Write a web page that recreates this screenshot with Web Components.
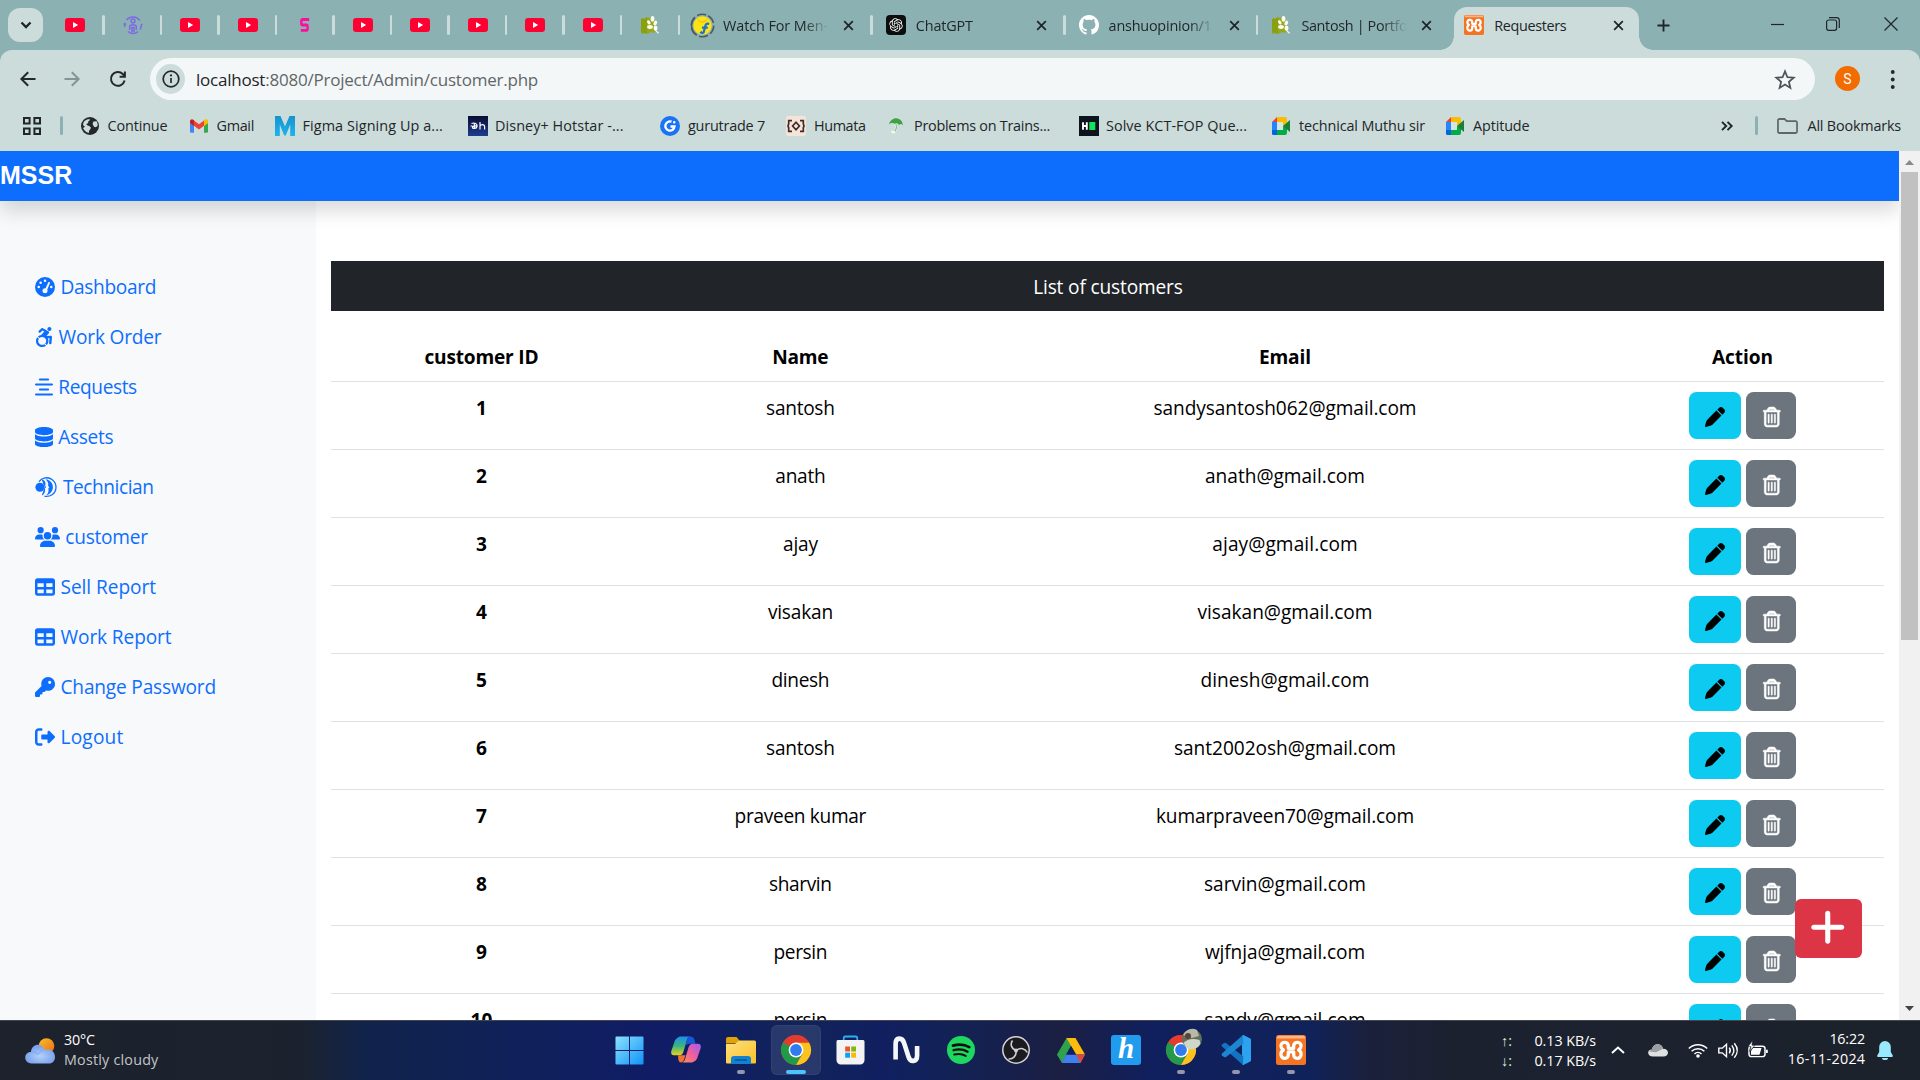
<!DOCTYPE html>
<html lang="en">
<head>
<meta charset="utf-8">
<title>Requesters</title>
<style>
html,body{margin:0;padding:0;height:100%;overflow:hidden}
body{font-family:"Open Sans","Noto Sans",sans-serif;color:#1f2528}
</style>
</head>
<body>
<desktop-screen></desktop-screen>
<script>
const FA = {
  database:['0 0 448 512','<path d="M448 80v48c0 44.2-100.3 80-224 80S0 172.2 0 128V80C0 35.8 100.3 0 224 0S448 35.8 448 80zM393.2 214.7c20.8-7.4 39.9-16.9 54.8-28.6V288c0 44.2-100.3 80-224 80S0 332.2 0 288V186.1c14.9 11.8 34 21.2 54.8 28.6C99.7 230.7 159.5 240 224 240s124.3-9.3 169.2-25.3zM0 346.1c14.9 11.8 34 21.2 54.8 28.6C99.7 390.7 159.5 400 224 400s124.3-9.3 169.2-25.3c20.8-7.4 39.9-16.9 54.8-28.6V432c0 44.2-100.3 80-224 80S0 476.2 0 432V346.1z"/>'],
  table:['0 0 512 512','<path d="M64 256V160H224v96H64zm0 64H224v96H64V320zm224 96V320H448v96H288zM448 256H288V160H448v96zM64 32C28.7 32 0 60.7 0 96V416c0 35.3 28.7 64 64 64H448c35.3 0 64-28.7 64-64V96c0-35.3-28.7-64-64-64H64z"/>'],
  key:['0 0 512 512','<path d="M336 352c97.2 0 176-78.8 176-176S433.2 0 336 0S160 78.8 160 176c0 18.7 2.9 36.8 8.3 53.7L7 391c-4.5 4.5-7 10.6-7 17v80c0 13.3 10.7 24 24 24h80c13.3 0 24-10.7 24-24V448h40c13.3 0 24-10.7 24-24V384h40c6.4 0 12.5-2.5 17-7l33.3-33.3c16.9 5.4 35 8.3 53.7 8.3zM376 96a40 40 0 1 1 0 80 40 40 0 1 1 0-80z"/>'],
  logout:['0 0 512 512','<path d="M377.9 105.9L500.7 228.7c7.2 7.2 11.3 17.1 11.3 27.3s-4.1 20.1-11.3 27.3L377.9 406.1c-6.4 6.4-15 9.9-24 9.9c-18.7 0-33.9-15.2-33.9-33.9l0-62.1-128 0c-17.7 0-32-14.3-32-32l0-64c0-17.7 14.3-32 32-32l128 0 0-62.1c0-18.7 15.2-33.9 33.9-33.9c9 0 17.6 3.6 24 9.9zM160 96L96 96c-17.7 0-32 14.3-32 32l0 256c0 17.7 14.3 32 32 32l64 0c17.7 0 32 14.3 32 32s-14.3 32-32 32l-64 0c-53 0-96-43-96-96L0 128C0 75 43 32 96 32l64 0c17.7 0 32 14.3 32 32s-14.3 32-32 32z"/>'],
  users:['0 0 640 512','<path d="M144 0a80 80 0 1 1 0 160A80 80 0 1 1 144 0zM512 0a80 80 0 1 1 0 160A80 80 0 1 1 512 0zM0 298.7C0 239.8 47.8 192 106.7 192h42.7c15.9 0 31 3.5 44.6 9.7c-1.3 7.2-1.9 14.7-1.9 22.3c0 38.2 16.8 72.5 43.3 96c-.2 0-.4 0-.7 0H21.3C9.6 320 0 310.4 0 298.7zM405.3 320c-.2 0-.4 0-.7 0c26.6-23.5 43.3-57.8 43.3-96c0-7.6-.7-15-1.9-22.3c13.6-6.3 28.7-9.7 44.6-9.7h42.7C592.2 192 640 239.8 640 298.7c0 11.8-9.6 21.3-21.3 21.3H405.3zM224 224a96 96 0 1 1 192 0 96 96 0 1 1 -192 0zM128 485.3C128 411.7 187.7 352 261.3 352H378.7C452.3 352 512 411.7 512 485.3c0 14.7-11.9 26.7-26.7 26.7H154.7c-14.7 0-26.7-11.9-26.7-26.7z"/>'],
  access:['0 0 448 512','<path d="M423.9 255.8L411 413.1c-3.3 40.7-63.9 35.1-60.6-4.9l10-122.5-41.1 2.3c10.1 20.7 15.8 43.9 15.8 68.5 0 41.2-16.1 78.7-42.3 106.5l-39.3-39.3c57.9-63.7 13.1-167.2-74-167.2-25.9 0-49.5 9.9-67.2 26L73 243.2c22-20.7 50.1-35.1 81.4-40.2l75.3-85.7-42.6-24.8-51.6 46c-30 26.8-70.6-18.5-40.5-45.4l68-60.7c9.8-8.8 24.1-10.2 35.5-3.6 0 0 139.3 80.9 139.5 81.1 16.2 10.1 20.7 36 6.1 52.6L285.7 229l106.1-5.9c18.5-1.1 33.6 14.4 32.1 32.7zm-64.9-154c28.1 0 50.9-22.8 50.9-50.9C409.9 22.8 387.1 0 359 0c-28.1 0-50.9 22.8-50.9 50.9 0 28.1 22.8 50.9 50.9 50.9zM179.6 456.5c-80.6 0-127.4-90.6-82.7-156.1l-39.7-39.7C36.4 287 24 320.3 24 356.4c0 130.7 150.7 201.4 251.4 122.5l-39.7-39.7c-16 10.9-35.3 17.3-56.1 17.3z"/>'],
  align:['0 0 448 512','<g fill="none" stroke="currentColor" stroke-width="52" stroke-linecap="round"><path d="M122 62h204M26 190h396M122 318h204M26 446h396"/></g>'],
  gauge:['0 0 512 512','<circle cx="256" cy="256" r="256"/><g fill="#f8f9fb"><circle cx="144" cy="144" r="32"/><circle cx="256" cy="96" r="32"/><circle cx="96" cy="256" r="32"/><circle cx="416" cy="256" r="32"/><circle cx="256" cy="352" r="64"/><path d="M338 142a24 24 0 0 1 44 20L300 350l-46-22z"/></g>'],
  teamspeak:['0 0 22 20','<circle cx="4.900" cy="10.300" r="4.500"/><path d="M6.500 2.500C11 3 10.800 7 10.200 9l1 1.300-1.200 1c.5 3.200-.4 5.700-3 7.200-.4-1.200 1-2.500 1.200-4.500L9.800 10 8 6.500C8 5 7.200 4 6.500 2.500z"/><path d="M10.600 2.200C20 3.500 20.500 16 11.300 18.300c2.200-2 2.600-4.300 2-6.800l1-1.300-1.200-1.200c.6-2.700-.5-5-2.500-6.800z"/><path d="M4 4.700C6.500.7 13-.7 17.300 2.700c4.900 3.700 5 11.500-.2 15-2 1.400-5 1.900-7.600 1.600" fill="none" stroke="currentColor" stroke-width="1.300"/>'],
  pen:['0 0 512 512','<path d="M362.700 19.300L314.300 67.700 444.300 197.700l48.400-48.400c25-25 25-65.500 0-90.500L453.300 19.300c-25-25-65.500-25-90.500 0zm-71 71L58.600 323.500c-10.400 10.400-18 23.300-22.200 37.400L1 481.200C-1.500 489.700 .8 498.800 7 505s15.300 8.500 23.700 6.100l120.300-35.400c14.100-4.200 27-11.800 37.400-22.200L421.700 220.300 291.700 90.300z"/>'],
  trash:['0 0 448 512','<path d="M160 48h128l22 32H138z" opacity=".65"/><path stroke="currentColor" stroke-width="12" d="M170.500 51.600L151.500 80h145l-19-28.400c-1.500-2.200-4-3.600-6.700-3.600H177.100c-2.700 0-5.200 1.300-6.700 3.600zm147-26.600L354.200 80H368h48 8c13.300 0 24 10.700 24 24s-10.700 24-24 24h-8V432c0 44.200-35.800 80-80 80H112c-44.200 0-80-35.800-80-80V128H24c-13.300 0-24-10.700-24-24S10.700 80 24 80h8H80 93.800l36.700-55.100C140.900 9.400 158.400 0 177.100 0h93.700c18.700 0 36.200 9.400 46.600 24.900zM80 128V432c0 17.700 14.300 32 32 32H336c17.700 0 32-14.300 32-32V128H80zm80 64V400c0 8.800-7.200 16-16 16s-16-7.200-16-16V192c0-8.800 7.200-16 16-16s16 7.200 16 16zm80 0V400c0 8.800-7.200 16-16 16s-16-7.200-16-16V192c0-8.800 7.200-16 16-16s16 7.200 16 16zm80 0V400c0 8.800-7.200 16-16 16s-16-7.200-16-16V192c0-8.800 7.200-16 16-16s16 7.200 16 16z"/>'],
  plus:['0 0 448 512','<path d="M256 80c0-17.700-14.300-32-32-32s-32 14.300-32 32V224H48c-17.700 0-32 14.300-32 32s14.300 32 32 32H192V432c0 17.700 14.300 32 32 32s32-14.300 32-32V288H400c17.700 0 32-14.300 32-32s-14.300-32-32-32H256V80z"/>']
};
const line = (d, w=2) => `<path d="${d}" fill="none" stroke="currentColor" stroke-width="${w}"/>`;
const chrome = '<circle cx="15" cy="15" r="15" fill="#e33b2e"/><path d="M2 7.500A15 15 0 0 0 15 30l6.500-11.300L15 15z" fill="#229a4a"/><path d="M15 30A15 15 0 0 0 28 7.500H15l6.500 11.200z" fill="#fcc31f"/><path d="M2 7.500 8.500 18.800 15 7.500z" fill="#229a4a"/><path d="M2 7.500A15 15 0 0 1 28 7.500H15L8.500 11z" fill="#e33b2e"/><circle cx="15" cy="15" r="7.400" fill="#fff"/><circle cx="15" cy="15" r="5.900" fill="#2f7bef"/>';
const meet = '<path d="M1 6 6 1v5z" fill="#ea4335"/><path d="M6 1h8a2 2 0 0 1 2 2v5l-4 2V6H6z" fill="#fbbc04"/><path d="M1 6h5v8H1z" fill="#2684fc"/><path d="M1 14h5v5H2.500A1.500 1.500 0 0 1 1 17.500z" fill="#0066da"/><path d="M6 14h6v-4l4 2v5a2 2 0 0 1-2 2H6z" fill="#00ac47"/><path d="M12 10 19 4v12z" fill="#188038"/><path d="M6 6h6v8H6z" fill="#d5e5e4"/>';
const xampp = '<rect width="30" height="30" rx="2.500" fill="#f37423"/><path d="M1 2.500A2 2 0 0 1 3 .7h24a2 2 0 0 1 2 1.800v1H1z" fill="#fbb486"/><path d="M12.300 13.300h5.400V10.500C18.300 5.800 25.600 6.500 25 11.300Q24.600 13.800 22.600 15Q25.500 16.500 25 20C24.200 24.600 18 24.300 17.700 20V16.900h-5.400V20C12 24.300 5.800 24.600 5 20Q4.500 16.500 7.400 15Q5.400 13.800 5 11.300C4.400 6.500 11.700 5.800 12.300 10.500z" fill="none" stroke="#fff" stroke-width="3.300" stroke-linejoin="round"/>';
const leaf = '<path d="M1 4l2-1 1 1 3-2 1 2V18l-2 1-2-1-2 1-1-2z" fill="#8aa00f"/><path d="M7 2.500h4l5 4.500v9l-2 2-3-1-2 1.500H7z" fill="#95a91c"/><g fill="#fbfdf4"><ellipse cx="12.500" cy="3.800" rx="1.900" ry="2.900"/><ellipse cx="8.800" cy="7.300" rx="1.500" ry="2.300" transform="rotate(-35 8.800 7.300)"/><ellipse cx="15.300" cy="8" rx="1.700" ry="2.600" transform="rotate(25 15.300 8)"/><ellipse cx="10" cy="12" rx="2.900" ry="1.900"/><ellipse cx="15.500" cy="13" rx="2" ry="2.600"/><path d="M15 14l4 4-.8.8-4-4z"/></g>';
const ICONS = Object.assign(FA, {
  youtube:['0 0 20 14','<rect width="20" height="14" rx="3.200" fill="#ff0033"/><path d="M8 4v6l5.200-3z" fill="#fff"/>'],
  person:['0 0 20 20','<g fill="none" stroke="#7b6be6" stroke-width="1.500"><path d="M3.600 5A8.300 8.300 0 0 1 16.800 5.500M18.300 9.500a8.300 8.300 0 0 1-1.300 5.200M5 16.500a8.300 8.300 0 0 0 10 .2M1.700 12V8.500M.7 9.800l1-1.300 1.300 1M18.300 10l1.200-1"/><circle cx="10" cy="6" r="1.900"/><path d="M6.700 15v-3a2 2 0 0 1 2-2h2.600a2 2 0 0 1 2 2v3M9 17v-4.500h2V17"/></g>'],
  pinks:['0 0 12 14','<path d="M11 1.500H3.500Q1.600 1.500 1.600 3.300v2.400Q1.600 7 3.300 7h4.800q1 0 1 1.200v2.500q0 1.700-2 1.700H1" fill="none" stroke="#fb0f9c" stroke-width="2.900"/>'],
  leaf:['0 0 20 20',leaf],
  flipkart:['0 0 26 26','<circle cx="13" cy="13" r="11.700" fill="none" stroke="#4b5b60" stroke-width="1.700" stroke-dasharray="9.500 2.750" transform="rotate(-60 13 13)"/><path d="M5 5A11.700 11.700 0 0 0 7 23" fill="none" stroke="#4b5b60" stroke-width="1.700"/><circle cx="13" cy="13" r="9.500" fill="#fce313"/><path d="M8 6.500c3 4 7 4 10 0" fill="none" stroke="#f9b80f" stroke-width="1.200"/><path d="M20 11.300c-3-.8-3.800.6-4.300 3L14 20.800M12.500 15.300h6M10.800 19.500c1.200 1.500 2.500 1.800 3.400.5" fill="none" stroke="#1b70d8" stroke-width="2.300"/>'],
  gpt:['0 0 20 20','<rect width="20" height="20" rx="4" fill="#0b0d0e"/><path fill="#fff" transform="translate(3.200 3.200) scale(.567)" d="M22.2819 9.8211a5.9847 5.9847 0 0 0-.5157-4.9108 6.0462 6.0462 0 0 0-6.5098-2.9A6.0651 6.0651 0 0 0 4.9807 4.1818a5.9847 5.9847 0 0 0-3.9977 2.9 6.0462 6.0462 0 0 0 .7427 7.0966 5.98 5.98 0 0 0 .511 4.9107 6.051 6.051 0 0 0 6.5146 2.9001A5.9847 5.9847 0 0 0 13.2599 24a6.0557 6.0557 0 0 0 5.7718-4.2058 5.9894 5.9894 0 0 0 3.9977-2.9001 6.0557 6.0557 0 0 0-.7475-7.0729zm-9.022 12.6081a4.4755 4.4755 0 0 1-2.8764-1.0408l.1419-.0804 4.7783-2.7582a.7948.7948 0 0 0 .3927-.6813v-6.7369l2.02 1.1686a.071.071 0 0 1 .038.052v5.5826a4.504 4.504 0 0 1-4.4945 4.4944zm-9.6607-4.1254a4.4708 4.4708 0 0 1-.5346-3.0137l.142.0852 4.783 2.7582a.7712.7712 0 0 0 .7806 0l5.8428-3.3685v2.3324a.0804.0804 0 0 1-.0332.0615L9.74 19.9502a4.4992 4.4992 0 0 1-6.1408-1.6464zM2.3408 7.8956a4.485 4.485 0 0 1 2.3655-1.9728V11.6a.7664.7664 0 0 0 .3879.6765l5.8144 3.3543-2.0201 1.1685a.0757.0757 0 0 1-.071 0l-4.8303-2.7865A4.504 4.504 0 0 1 2.3408 7.872zm16.5963 3.8558L13.1038 8.364 15.1192 7.2a.0757.0757 0 0 1 .071 0l4.8303 2.7913a4.4944 4.4944 0 0 1-.6765 8.1042v-5.6772a.79.79 0 0 0-.407-.667zm2.0107-3.0231l-.142-.0852-4.7735-2.7818a.7759.7759 0 0 0-.7854 0L9.409 9.2297V6.8974a.0662.0662 0 0 1 .0284-.0615l4.8303-2.7866a4.4992 4.4992 0 0 1 6.6802 4.66zM8.3065 12.863l-2.02-1.1638a.0804.0804 0 0 1-.038-.0567V6.0742a4.4992 4.4992 0 0 1 7.3757-3.4537l-.142.0805L8.704 5.459a.7948.7948 0 0 0-.3927.6813zm1.0976-2.3654l2.602-1.4998 2.6069 1.4998v2.9994l-2.5974 1.4997-2.6067-1.4997Z"/>'],
  github:['0 0 16 16','<path fill="#fff" d="M8 0C3.580 0 0 3.580 0 8c0 3.540 2.290 6.530 5.470 7.590.4.070.55-.17.55-.38 0-.19-.010-.82-.010-1.490-2.010.37-2.530-.49-2.690-.94-.090-.23-.48-.94-.82-1.130-.28-.15-.68-.52-.010-.53.63-.010 1.080.58 1.230.82.72 1.210 1.870.87 2.330.66.070-.52.28-.87.51-1.070-1.780-.2-3.640-.89-3.640-3.950 0-.87.31-1.590.82-2.150-.080-.2-.36-1.020.080-2.120 0 0 .67-.21 2.200.82.64-.18 1.320-.27 2-.27s1.360.090 2 .27c1.530-1.040 2.200-.82 2.200-.82.44 1.100.16 1.920.080 2.120.51.56.82 1.270.82 2.150 0 3.070-1.870 3.750-3.650 3.950.29.25.54.73.54 1.480 0 1.070-.010 1.930-.010 2.200 0 .21.15.46.55.38A8.010 8.010 0 0 0 16 8c0-4.420-3.580-8-8-8z"/>'],
  xampp:['0 0 30 30',xampp],
  close:['0 0 12 12',line('M1.300 1.300 10.700 10.700M10.700 1.300 1.300 10.700',1.900)],
  add:['0 0 14 14',line('M7 .5v13M.5 7h13',2)],
  chev:['0 0 12 8',line('M1.500 1.500 6 6l4.500-4.500',2.300)],
  min:['0 0 14 14',line('M0 7.500h14',1.200)],
  max:['0 0 14 14','<rect x=".6" y="3" width="10" height="10.300" rx="2" fill="none" stroke="currentColor" stroke-width="1.200"/>'+line('M3 .7h7.500a2.800 2.800 0 0 1 2.800 2.800V11',1.200)],
  wclose:['0 0 14 14',line('M.5.5l13 13M13.500.5l-13 13',1.200)],
  back:['0 0 16 16',line('M15.500 8H1.500M8.200 1.200 1.400 8l6.800 6.800',2)],
  fwd:['0 0 16 16',line('M.5 8h14M7.800 1.200 14.600 8l-6.800 6.800',2)],
  reload:['0 0 16 16',line('M14.600 9.500A6.900 6.900 0 1 1 12.800 3L14.700 5.300',2)+line('M14.900.5v5.300H9.600',2)],
  info:['0 0 18 18','<circle cx="9" cy="9" r="7.800" fill="none" stroke="currentColor" stroke-width="1.700"/>'+line('M9 8v5',1.700)+'<circle cx="9" cy="5.400" r="1.100"/>'],
  star:['0 0 20 20','<path d="M10 2.200l2.200 5.300 5.700.45-4.350 3.700 1.330 5.550L10 14.200l-4.880 3L6.450 11.650 2.100 7.950 7.800 7.500z" fill="none" stroke="currentColor" stroke-width="1.600"/>'],
  dots:['0 0 6 22','<circle cx="3" cy="3.200" r="2.100"/><circle cx="3" cy="11" r="2.100"/><circle cx="3" cy="18.800" r="2.100"/>'],
  apps:['0 0 18 18','<g fill="none" stroke="currentColor" stroke-width="2"><path d="M1 1h5.600v5.600H1zM11.400 1H17v5.600h-5.600zM1 11.400h5.600V17H1zM11.400 11.400H17V17h-5.600z"/></g>'],
  globe:['0 0 18 18','<circle cx="9" cy="9" r="9" fill="#23282b"/><path d="M3 4.500c2-2 4-2.500 6-2.300-.2 1.300-1 2-2 2.400.8 1.400 0 2-1.400 2.200C5.200 8 6 8.500 8 9c1.200.3 1 1.300 2 1.400-.4 2-2 2-2.200 5.600-3-.6-5-2.800-5.800-5L4 9.700 2 8c0-1.300.4-2.500 1-3.500zM12.500 4.500l3-.3c1 1.500 1.300 2.800 1.200 4.500-1.200 1-2.500 2.500-4 .5-1-1.500-1.500-3-.2-4.700z" fill="#cbdcdb"/>'],
  gmail:['0 0 18 14','<path d="M0 2v10.500A1.300 1.300 0 0 0 1.300 13.800H4V5.500z" fill="#4285f4"/><path d="M18 2v10.500a1.300 1.300 0 0 1-1.300 1.300H14V5.500z" fill="#34a853"/><path d="M14 1.500 18 1.800v2L14 7z" fill="#fbbc04"/><path d="M4 1.500v5.300l5 3.800 5-3.800V1.500L9 5.300z" fill="#ea4335"/><path d="M0 2.200C0 .3 2.200-.5 3.600.9L4 1.300V7L0 4z" fill="#c5221f"/><path d="M14 1.300C15.500-.3 18 .2 18 2.200V4l-4 3z" fill="#fbbc04"/>'],
  medium:['0 0 20 20','<defs><linearGradient id="me" x2="0" y2="1"><stop offset="0" stop-color="#1792cf"/><stop offset="1" stop-color="#1cb4ee"/></linearGradient></defs><path d="M0 0h5.500L10 10.500 14.500 0H20v20h-4.800V8.500L10.800 19.500H9.200L4.800 8.500V20H0z" fill="url(#me)"/>'],
  hotstar:['0 0 20 20','<defs><linearGradient id="hs" x2="0" y2="1"><stop offset="0" stop-color="#0a0b33"/><stop offset="1" stop-color="#1b3d90"/></linearGradient></defs><rect width="20" height="20" fill="url(#hs)"/><path d="M3.500 7.500c3-1.300 6.200.2 5.500 3-.5 2.300-4.500 2.600-4.600 1-.1-1.300 3-2 4.400-1.300M6.300 7.800v4.500M2.500 10h2M12 6v7.500M12 10c.8-2 4.600-2 4.600.5v3" fill="none" stroke="#fff" stroke-width="1.200"/>'],
  guru:['0 0 20 20','<circle cx="10" cy="10" r="10" fill="#1a73f3"/><path d="M11.500 5.700A4.600 4.600 0 1 0 14.500 10.500H10.500" fill="none" stroke="#fff" stroke-width="2.300"/><circle cx="14.200" cy="6.300" r="1.200" fill="#fff"/>'],
  humata:['0 0 20 20','<rect width="20" height="20" rx="2.500" fill="#f5e4da"/><g fill="none" stroke="#432c28" stroke-width="1.700"><path d="M6 4.700H2.700v3.200l-.7 2 .7 2v3.400H6M14 4.700h3.300v3.200l.7 2-.7 2v3.400H14M10 6.200 13.400 10 10 13.800 6.600 10z"/></g>'],
  umbrella:['0 0 18 18','<path d="M1 8C3 1 11-1 15.500 4.500L17 8.500c-2-1.400-3-1.300-4.500 0C11 7 10 6.500 8 7.500 6 6 3 6 1 8z" fill="#43a047"/><path d="M8.500 7c1.600 3 .7 6-1 8.500-1.300 1.600-3 .3-2.600-1" fill="none" stroke="#f3faf3" stroke-width="2.400"/><path d="M8.700 7c1.400 3 .7 6-1.100 8.300" fill="none" stroke="#6fc173" stroke-width="1.200"/>'],
  hrank:['0 0 20 20','<rect width="20" height="20" fill="#0e141e"/><path d="M4 6.300v7.400M7.800 6.300v7.400M4 10h4" stroke="#fff" stroke-width="1.900"/><rect x="10.300" y="6" width="6" height="8" fill="#14e35c"/>'],
  meet:['0 0 20 20',meet],
  more:['0 0 12 10',line('M1 .8 5.200 5 1 9.200M6.500.8 10.700 5 6.500 9.200',1.900)],
  folder:['0 0 22 16','<path d="M1 13V2.500A1.500 1.500 0 0 1 2.500 1H8l2.200 2.200h9.300A1.500 1.500 0 0 1 21 4.700V13.500A1.500 1.500 0 0 1 19.500 15h-17A1.500 1.500 0 0 1 1 13.500z" fill="none" stroke="#5f6668" stroke-width="1.800"/>'],
  up:['0 0 10 5','<path d="M0 5h10L5 0z"/>'],
  down:['0 0 10 5','<path d="M0 0h10L5 5z"/>'],
  weather:['0 0 30 26','<defs><linearGradient id="su" x1="0" x2="1" y2="1"><stop offset="0" stop-color="#f8c02b"/><stop offset="1" stop-color="#ef6a12"/></linearGradient><radialGradient id="cl" cy=".6"><stop offset="0" stop-color="#b5d1fb"/><stop offset="1" stop-color="#7ba4ec"/></radialGradient></defs><circle cx="21.500" cy="8" r="7.800" fill="url(#su)"/><path d="M6.500 25.500C-2 25-1.500 14 6 14 6.500 5 18 4.500 19.500 12 26 10 30 14 30 19c0 4-2.500 6.500-6 6.500z" fill="url(#cl)"/><path d="M6 14c3-.5 6 1 7 3M14 16c1-2.500 3.500-4 5.500-4" fill="none" stroke="#86acee" stroke-width="1.200"/>'],
  windows:['0 0 30 30','<defs><linearGradient id="wi" x2="1" y2="1"><stop offset="0" stop-color="#8be1fd"/><stop offset="1" stop-color="#0f93f8"/></linearGradient></defs><path d="M.5 1.500a1 1 0 0 1 1-1H14.500v14H.5zM15.500.5h13a1 1 0 0 1 1 1v13h-14zM.5 15.500h14v14h-13a1 1 0 0 1-1-1zM15.500 15.500h14v13a1 1 0 0 1-1 1h-13z" fill="url(#wi)"/>'],
  copilot:['0 0 30 28','<defs><linearGradient id="c1" x2="0" y2="1"><stop offset="0" stop-color="#1f8ff0"/><stop offset=".5" stop-color="#39b47e"/><stop offset="1" stop-color="#e7d21e"/></linearGradient><linearGradient id="c2" x1="1" x2="0" y2="1"><stop offset="0" stop-color="#a05cf0"/><stop offset=".5" stop-color="#ee5f9f"/><stop offset="1" stop-color="#fb9157"/></linearGradient></defs><path d="M7 1.500Q8 .5 9.500.5H20q-3 0-4 3.500L12.500 16q-1 4-4.500 4H3Q-.5 20 .3 15.500L4 4.500Q5 2.500 7 1.500z" fill="url(#c1)"/><path d="M17 .5h2.500q3 0 4 3.500l1 4H19q-3 0-4.500 2z" fill="#1758d6"/><path d="M23 26.500q-1 1-2.500 1H10q3 0 4-3.500L17.500 12q1-4 4.500-4h5q3.500 0 2.700 4.500L26 23.500q-1 2-3 3z" fill="url(#c2)"/><path d="M7 20h6.500l1 0-2 6q-1 1.500-2.500 1.500-2 0-2.700-3z" fill="#f0722f"/>'],
  explorer:['0 0 30 28','<path d="M0 3a2 2 0 0 1 2-2h8.500l3 3.500-3 3H0z" fill="#e2a106"/><defs><linearGradient id="fo" x2="1" y2="1"><stop offset="0" stop-color="#fde079"/><stop offset="1" stop-color="#fbc02a"/></linearGradient></defs><path d="M0 8h9l4-3.500h15.500A1.500 1.500 0 0 1 30 6v20.500a1 1 0 0 1-1 1H1a1 1 0 0 1-1-1z" fill="url(#fo)"/><path d="M5 28v-5a3 3 0 0 1 3-3h14a3 3 0 0 1 3 3v5z" fill="#1281d2"/><path d="M9 24h12" stroke="#0b508c" stroke-width="1.400"/>'],
  chrome:['0 0 30 30',chrome],
  chrome2:['0 0 36 36','<g transform="translate(0 6)">'+chrome+'</g><circle cx="26" cy="10" r="10" fill="#65705c"/><path d="M17 6a10 10 0 0 1 14-5l2 6-7 2z" fill="#b9b7a8"/><path d="M17.500 14c4-4 9-5 16-3l1 4a10 10 0 0 1-14 4z" fill="#cfd8c8"/><circle cx="22" cy="7" r="3" fill="#5b4238"/>'],
  store:['0 0 30 30','<path d="M8 7V3a1.500 1.500 0 0 1 1.500-1.500h11A1.500 1.500 0 0 1 22 3v4" fill="none" stroke="#2bb1f2" stroke-width="1.800"/><path d="M.5 6.500a1.500 1.500 0 0 1 1.500-1.500h26a1.500 1.500 0 0 1 1.500 1.500V25a4.500 4.500 0 0 1-4.500 4.500H5A4.500 4.500 0 0 1 .5 25z" fill="#f3f3f4"/><path d="M9.500 11.500h5v5h-5z" fill="#f2512a"/><path d="M15.700 11.500h5v5h-5z" fill="#7fba08"/><path d="M9.500 17.700h5v5h-5z" fill="#08a4ee"/><path d="M15.700 17.700h5v5h-5z" fill="#fdb80c"/>'],
  wave:['0 0 28 28','<path d="M2.700 23.500V8C2.700.8 9.800 1 11.500 7L16 20.500C18 27 25 26 25 19.500V10" fill="none" stroke="#f5f6fa" stroke-width="4.800"/>'],
  spotify:['0 0 28 28','<circle cx="14" cy="14" r="14" fill="#1ed760"/><g fill="none" stroke="#111" stroke-linecap="round"><path d="M6 9.600c5.500-1.600 12-1 16.300 1.500" stroke-width="2.700"/><path d="M6.600 14.200c5-1.400 10-.8 14 1.500" stroke-width="2.300"/><path d="M7.200 18.500c4.300-1 8.200-.6 11.500 1.400" stroke-width="1.900"/></g>'],
  obs:['0 0 28 28','<circle cx="14" cy="14" r="13.200" fill="#1b1b1e" stroke="#d5d5d8" stroke-width="1.500"/><g fill="none" stroke="#cfcfd3" stroke-width="1.600"><path d="M14 14.500C9 12.500 8 8 10.500 4.500M14 14.500c4.500-3.500 9.500-2 11.300 2M14 14.500c.8 5.500-3 8.800-7.500 8.500"/></g><circle cx="14" cy="14.500" r="2" fill="#cfcfd3"/>'],
  drive:['0 0 28 25','<path d="M9.500 0h9L14 8 5 24 0 16.500z" fill="#2fa24c"/><path d="M9.500 0h9L28 16.500h-9z" fill="#fdbb0d"/><path d="M5 25 0 16.500h9L14 8" fill="#2fa24c"/><path d="M9 16.500h19L23.500 25H4.700z" fill="#3f7ff2"/><path d="M19 16.500h9L23.500 25z" fill="#e8432f"/><path d="M9 16.500 14 8l5 8.500z" fill="#15205a"/>'],
  vscode:['0 0 30 30','<path d="M22 0 29 3.500Q30 4 30 5.500v19q0 1.500-1 2L22 30 21 29V1z" fill="#2ba3ee"/><path d="M22 30 1 11.500q-1-1 0-2L3 8q1-.7 2 0L22.500 21.500z" fill="#1273c0"/><path d="M22 0 1 18.500q-1 1 0 2L3 22q1 .7 2 0L22.500 8.500z" fill="#1d86d2"/><path d="M22 0 22.500 8.500 22.500 21.500 22 30l7-3.500q1-.5 1-2v-19q0-1.500-1-2z" fill="#2ba3ee"/>'],
  tup:['0 0 14 8',line('M1 7l6-5.500L13 7',2)],
  cloud:['0 0 20 14','<path d="M5 13.500C-1 13.500-1.500 6 4 6 5-1.500 14-1.500 15 5c3.500 0 5 2 5 4.300 0 2.500-2 4.200-4.500 4.200z" fill="#dfe0e2"/><path d="M4 6C5-1.500 14-1.500 15 5L8 9 1 8z" fill="#9c9ea3"/>'],
  wifi:['0 0 20 16','<g fill="none" stroke="#fff" stroke-width="1.500"><path d="M.8 6.500a13 13 0 0 1 18.400 0"/><path d="M3.600 9.300a9 9 0 0 1 12.800 0"/><path d="M6.500 12a5 5 0 0 1 7 0"/></g><circle cx="10" cy="14" r="1.800" fill="#fff"/>'],
  sound:['0 0 20 18','<g fill="none" stroke="#fff" stroke-width="1.400"><path d="M.8 6.500h3.500L8.500 2.500v13L4.300 11.500H.8zM11.300 6q2 3 0 6M13.800 3.500q4 5.500 0 11M16.300 1.300q6 7.700 0 15.400"/></g>'],
  battery:['0 0 20 18','<rect x="1" y="5.500" width="16" height="11" rx="2.500" fill="none" stroke="#fff" stroke-width="1.500"/><path d="M5 7.500h8.500l-2 7H3v-4z" fill="#fff"/><path d="M18 9.200h1.800v3.600H18z" fill="#fff"/><path d="M4.500-.5 0 6h3L1.500 11 7 4.500H4z" fill="#fff" stroke="#1c212b" stroke-width=".7"/>'],
  bell:['0 0 16 19','<path d="M8 0a5.800 5.800 0 0 1 5.800 5.800V11l2 3.500q.2 1.500-1 1.500H1.200q-1.200 0-1-1.500l2-3.500V5.800A5.800 5.800 0 0 1 8 0z" fill="#99e9fd"/><path d="M5 17h6a3 2 0 0 1-6 0z" fill="#99e9fd"/>']
});
const define = (name, css, html, ready) => customElements.define(name, class extends HTMLElement {
  connectedCallback(){
    if (this.shadowRoot) return;
    const root = this.attachShadow({mode:'open'});
    const a = k => this.getAttribute(k) || '';
    root.innerHTML = `<style>${css}</style>` + (typeof html === 'function' ? html(a, this) : html);
    if (ready) ready(this, root);
  }
});
/* <x-icon name w h> inline glyph */
define('x-icon', ':host{display:block;flex:none;line-height:0}svg{display:block;fill:currentColor;overflow:visible}', a => {
  const [vb, body] = ICONS[a('name')];
  return `<svg width="${a('w')}" height="${a('h')}" viewBox="${vb}" preserveAspectRatio="none">${body}</svg>`;
});
/* <fit-text w> tracks its text so that it spans w pixels */
define('fit-text', ':host{display:block;flex:none;white-space:nowrap}span{display:inline-block}', '<span><slot></slot></span>', (el, root) => {
  const w = +el.getAttribute('w');
  if (!w) return;
  const s = root.querySelector('span'), n = el.textContent.length;
  const d = (w - s.getBoundingClientRect().width) / n;
  s.style.letterSpacing = d.toFixed(3) + 'px';
  s.style.marginRight = (-d).toFixed(3) + 'px';
});
define('browser-tab', `
:host{display:flex;align-items:center;box-sizing:border-box;flex:none;height:50px;font-size:14.4px;width:57.55px;position:relative}
:host([wide]){width:192.8px}
:host::after{content:"";margin-left:auto;width:2.500px;height:20px;border-radius:2px;background:#cbdcdb}
.i{width:48px;display:flex;justify-content:center;flex:none;margin-left:4px}
:host([wide]) .i{width:48px;margin-left:-1px}
:host([icon=flipkart]) .i{margin-left:-2px;margin-right:1px}
.t{width:106px;overflow:hidden;-webkit-mask-image:linear-gradient(90deg,#000 76%,transparent 100%);margin-left:-4px;line-height:24px;padding-top:2px}
x-icon.c{margin-left:14px}
:host([active]){width:185px;margin-left:3px;margin-top:7px;height:43px;background:#cbdcdb;border-radius:13px 13px 0 0;padding-bottom:7px}
:host([active])::after{display:none}
:host([active]) .i{width:40px;margin-left:0}
:host([active]) .t{margin-left:0;-webkit-mask-image:none}
:host([active]) x-icon.c{margin-left:13px}
.l,.r{display:none;position:absolute;bottom:0;width:14px;height:14px}
:host([active]) .l,:host([active]) .r{display:block}
.l{left:-14px;background:radial-gradient(circle at 0 0,transparent 13.500px,#cbdcdb 14px)}
.r{right:-14px;background:radial-gradient(circle at 100% 0,transparent 13.500px,#cbdcdb 14px)}
`, a => `<div class="i"><x-icon name="${a('icon')}" w="${a('iw')||20}" h="${a('ih')||20}"></x-icon></div>` + (a('label') ? `<div class="t"><fit-text w="${a('tw')}">${a('label')}</fit-text></div><x-icon class="c" name="close" w="11" h="11"></x-icon>` : '') + '<i class="l"></i><i class="r"></i>');
define('tab-strip', `
:host{display:flex;height:50px;background:#8cb1b2;align-items:flex-start;color:#1f2528}
.s{width:35px;height:34px;border-radius:12px;background:#cbdcdb;margin:8px 4px 0 8px;display:flex;align-items:center;justify-content:center}
.w{display:flex;align-items:center;height:50px;margin:-1px 0 0 -1px}
.last::after{visibility:hidden}
`, `<div class="s"><x-icon name="chev" w="12" h="8"></x-icon></div>` +
 ['youtube','person','youtube','youtube','pinks','youtube','youtube','youtube','youtube','youtube','leaf'].map(n => `<browser-tab icon="${n}" iw="${n==='pinks'?10:20}" ih="${n==='youtube'?14:n==='pinks'?14:20}"></browser-tab>`).join('') +
 `<browser-tab wide icon="flipkart" iw="25" ih="25" label="Watch For Men-" tw="105"></browser-tab>
 <browser-tab wide icon="gpt" label="ChatGPT" tw="57"></browser-tab>
 <browser-tab wide icon="github" label="anshuopinion/1" tw="103"></browser-tab>
 <browser-tab wide icon="leaf" label="Santosh | Portfo" tw="106" class="last"></browser-tab>
 <browser-tab active icon="xampp" label="Requesters" tw="72"></browser-tab>
 <div class="w"><x-icon name="add" w="13" h="13" style="margin:2px 0 0 19px"></x-icon><x-icon name="min" w="13" h="14" style="margin-left:101px"></x-icon><x-icon name="max" w="14" h="14" style="margin-left:42px"></x-icon><x-icon name="wclose" w="14" h="14" style="margin-left:44px"></x-icon></div>`);
define('address-bar', `
:host{display:flex;align-items:center;height:58px;box-sizing:border-box;padding-left:20px;background:#cbdcdb;border-radius:12px 12px 0 0;color:#23282b}
.o{margin-left:24px;width:1665px;height:42px;border-radius:21px;background:#f3f7f8;display:flex;align-items:center;font-size:17px}
.c{width:29px;height:30px;border-radius:50%;background:#cbdcdb;margin:0 11px 0 6px;display:flex;align-items:center;justify-content:center}
.u{color:#5f6668;margin-top:1px}.u b{font-weight:400;color:#1f2528}
.a{width:25px;height:25px;border-radius:50%;background:#f26c00;color:#fff;display:flex;align-items:center;justify-content:center;font:14px Roboto,sans-serif;margin:-1px 0 0 20px}
`, `<x-icon name="back" w="16" h="16"></x-icon><x-icon name="fwd" w="16" h="16" style="margin-left:28px;color:#839496"></x-icon><x-icon name="reload" w="16" h="16" style="margin-left:30px"></x-icon>
<div class="o"><div class="c"><x-icon name="info" w="18" h="18"></x-icon></div><fit-text class="u" w="342"><b>localhost</b>:8080/Project/Admin/customer.php</fit-text><x-icon name="star" w="22" h="22" style="margin:1px 0 0 1236px;color:#4d5456"></x-icon></div>
<div class="a">S</div><x-icon name="dots" w="5.500" h="21" style="margin-left:30px"></x-icon>`);
define('book-mark', `:host{display:flex;align-items:center;flex:none;height:30px;font-size:14.400px;line-height:24px}.i{flex:none}fit-text{margin-top:1px}`,
 a => `<x-icon class="i" name="${a('icon')}" w="${a('iw')}" h="${a('ih')}"></x-icon><fit-text w="${a('tw')}" style="margin-left:${a('gap')}px">${a('label')}</fit-text>`);
define('bookmarks-bar', `
:host{display:flex;align-items:center;height:43px;box-sizing:border-box;padding:0 0 8px 23px;background:#cbdcdb;color:#1f2528}
i{width:2.500px;height:19px;background:#8cb1b2;border-radius:2px;flex:none}`, () => {
  // icon, icon size, left edge, text left, text width, label
  const items = [['globe',18,18,81,107.5,60,'Continue'],['gmail',18,14,190,216.5,37.5,'Gmail'],['medium',20,20,275,302.5,140.5,'Figma Signing Up a...'],['hotstar',20,20,468,495,128.5,'Disney+ Hotstar -...'],['guru',20,20,660,688,77,'gurutrade 7'],['humata',20,20,786,814,51.5,'Humata'],['umbrella',16,17,888,914,136,'Problems on Trains...'],['hrank',20,20,1079,1106,141,'Solve KCT-FOP Que...'],['meet',20,20,1271,1299,126,'technical Muthu sir'],['meet',20,20,1445,1473,56.5,'Aptitude']];
  return '<x-icon name="apps" w="18" h="18" style="margin-right:19px"></x-icon><i style="margin-right:18.500px"></i>' + items.map((m, k) => {
    const next = k < items.length - 1 ? items[k+1][3] : 1721;
    return `<book-mark icon="${m[0]}" iw="${m[1]}" ih="${m[2]}" gap="${m[4]-m[3]-m[1]}" tw="${m[5]}" label="${m[6]}" style="width:${next-m[3]}px"></book-mark>`;
  }).join('') + '<x-icon name="more" w="12" h="10"></x-icon><i style="margin:0 19px 0 22px"></i><book-mark icon="folder" iw="21" ih="16" gap="10" tw="93.5" label="All Bookmarks"></book-mark>';
});
define('nav-item', `:host{display:flex;align-items:center;height:50px;color:#0d6efd;font-size:19.100px;line-height:30px}fit-text{margin-top:-1px}x-icon{margin-top:-1px}`,
 a => `<x-icon name="${a('icon')}" w="${a('iw')}" h="${a('ih')}"></x-icon><fit-text w="${a('tw')}" style="margin-left:${a('gap')}px">${a('label')}</fit-text>`);
define('side-bar', `:host{display:block;width:316px;flex:none;background:#f8f9fb;box-sizing:border-box;padding:61px 0 0 35px}`, () =>
 [['gauge',20,20,5.5,95.5,'Dashboard'],['access',18,20,5.5,103,'Work Order'],['align',18,20,5.3,78.5,'Requests'],['database',18,20,5.3,55,'Assets'],['teamspeak',22,20,6,90.5,'Technician'],['users',25,20,5.3,82.5,'customer'],['table',20,20,5.5,95.5,'Sell Report'],['table',20,20,5.5,111,'Work Report'],['key',20,20,5.5,155.5,'Change Password'],['logout',20,20,5.5,63,'Logout']]
 .map(n => `<nav-item icon="${n[0]}" iw="${n[1]}" ih="${n[2]}" gap="${n[3]}" tw="${n[4]}" label="${n[5]}"></nav-item>`).join(''));
define('customer-row', `
:host{display:grid;grid-template-columns:300px 338px 632px 283px;box-sizing:border-box;height:68px;border-bottom:1px solid #dee2e6;padding-top:10px;color:#000;font-size:19.100px;line-height:32px;justify-items:center}
:host([head]){height:51px;font-weight:700}
.n{font-weight:700}
.n,.m{padding-left:1px}
.b{display:flex;gap:5px;margin-top:0}
button{all:unset;box-sizing:border-box;height:47px;border-radius:7.500px;display:flex;align-items:center;justify-content:center}
.e{width:52px;background:#0dcaf0;color:#000}.d{width:50px;background:#6c757d;color:#fff}
`, a => `<fit-text class="n" w="${a('w0')}">${a('num')}</fit-text><fit-text class="m" w="${a('w1')}">${a('name')}</fit-text><fit-text w="${a('w2')}">${a('email')}</fit-text>` +
 (a('action') ? `<fit-text w="61">${a('action')}</fit-text>` : '<div class="b"><button class="e"><x-icon name="pen" w="20" h="20" style="margin-top:2px"></x-icon></button><button class="d"><x-icon name="trash" w="17.500" h="20" style="margin:2px 0 0 1px"></x-icon></button></div>'));
define('customer-table', `
:host{display:block;width:1553px;margin:60px 0 0 15px}
.h{height:50px;background:#212529;color:#fff;display:flex;align-items:center;justify-content:center;font-size:19.100px;line-height:32px;margin-bottom:20px}
.h fit-text{margin:2px 0 0 1px}`, () => '<div class="h"><fit-text w="149.500">List of customers</fit-text></div><customer-row head num="customer ID" w0="114" name="Name" w1="56" email="Email" w2="52" action="Action"></customer-row>' +
 [['santosh',68.5,'sandysantosh062@gmail.com',263],['anath',50,'anath@gmail.com',160],['ajay',35,'ajay@gmail.com',145.5],['visakan',65,'visakan@gmail.com',175],['dinesh',57.5,'dinesh@gmail.com',169],['santosh',68.5,'sant2002osh@gmail.com',222],['praveen kumar',131.5,'kumarpraveen70@gmail.com',258],['sharvin',62.5,'sarvin@gmail.com',162],['persin',53.5,'wjfnja@gmail.com',160],['persin',53.5,'sandy@gmail.com',161.5]]
 .map((r, i) => `<customer-row num="${i+1}" name="${r[0]}" w1="${r[1]}" email="${r[2]}" w2="${r[3]}"></customer-row>`).join(''));
define('scroll-bar', `:host{display:flex;flex-direction:column;align-items:center;width:21px;background:#f1f1f1;height:869px;flex:none;box-sizing:border-box;padding:9px 0 9px}
.t{width:17px;height:468px;background:#c1c1c1;margin:7px 0 auto}`, `<x-icon name="up" w="9" h="5" style="color:#8a8a8a"></x-icon><div class="t"></div><x-icon name="down" w="9" h="5" style="color:#444"></x-icon>`);
define('web-page', `
:host{display:flex;height:869px;background:#fff;overflow:hidden;position:relative}
.p{width:1899px;height:869px;overflow:hidden;display:flex;flex-direction:column;flex:none}
header{height:50px;flex:none;background:#0d6efd;color:#fff;font:700 25px/50px "Liberation Sans",Arial,sans-serif;box-shadow:0 10px 20px rgba(0,0,0,.15);position:relative;z-index:1}
header div{margin-top:-1px}
.m{display:flex;height:819px}
.f{position:absolute;left:1795px;top:748px;width:67px;height:59px;border-radius:6px;background:#dc3545;color:#fff;display:flex;align-items:center;justify-content:center;box-sizing:border-box;padding:0 1px 3px 0}
`, `<div class="p"><header><div>MSSR</div></header><div class="m"><side-bar></side-bar><customer-table></customer-table></div></div><scroll-bar></scroll-bar><div class="f"><x-icon name="plus" w="35.500" h="40.500"></x-icon></div>`);
define('task-app', `:host{display:flex;flex-direction:column;align-items:center;width:50px;height:50px;box-sizing:border-box;border-radius:6px;flex:none;position:relative}
:host([active]){background:rgba(255,255,255,.1);box-shadow:inset 0 0 0 1px rgba(255,255,255,.05)}
.i{height:50px;width:50px;display:flex;align-items:center;justify-content:center;flex:none}
.d{display:none;position:absolute;bottom:1px;width:8px;height:4px;border-radius:2px;background:#9297ad}
:host([open]) .d{display:block}:host([active]) .d{display:block;width:20px;background:#4cc2ff}
.h{width:30px;height:30px;background:#219bee;border-radius:3px;color:#fff;font:italic 700 29px/27px "Liberation Serif",serif;text-align:center}`,
 a => `<div class="i">${a('icon')==='letter' ? '<div class="h">h</div>' : `<x-icon name="${a('icon')}" w="${a('iw')}" h="${a('ih')}" style="${a('nudge')}"></x-icon>`}</div><div class="d"></div>`);
define('task-bar', `
:host{display:flex;height:60px;box-sizing:border-box;border-top:1px solid #41464f;color:#fff;font-size:14.300px;line-height:20px;
background:linear-gradient(90deg,#1d222c 0,#1b222e 300px,#11234b 365px,#10215a 520px,#101c66 660px,#11235a 800px,#111f60 880px,#11225a 925px,#1b1f43 1060px,#101f5d 1150px,#10225a 1310px,#1a203a 1370px,#1c2130 1450px,#1c222b 1920px)}
.w{display:flex;width:606px;padding:17px 0 0 25px;box-sizing:border-box}
.w div{margin:-8px 0 0 9px}.w fit-text+fit-text{color:#c3c5c9}
.apps{display:flex;gap:5px;margin-top:4px;width:895px}
.n{display:flex;flex-direction:column;margin-top:10px}
.n div{display:flex;gap:23.500px}
.k{display:flex;flex-direction:column;align-items:flex-end;width:78px;margin:8px 1px 0 19px}
.n .r{color:#d8f5da;width:10px}
.t{display:flex;align-items:center;height:58px}
`, `<div class="w"><x-icon name="weather" w="30" h="26"></x-icon><div><fit-text w="31">30°C</fit-text><fit-text w="94.500">Mostly cloudy</fit-text></div></div>
<div class="apps">
<task-app icon="windows" iw="29" ih="29" nudge="margin-right:3px"></task-app><task-app icon="copilot" iw="30" ih="27" nudge="margin-bottom:2px"></task-app><task-app open icon="explorer" iw="30" ih="28"></task-app><task-app active open icon="chrome" iw="30" ih="30"></task-app><task-app icon="store" iw="29" ih="30" nudge="margin-right:1px"></task-app><task-app icon="wave" iw="27" ih="28"></task-app><task-app icon="spotify" iw="28" ih="28"></task-app><task-app icon="obs" iw="28" ih="28"></task-app><task-app icon="drive" iw="28" ih="25"></task-app><task-app icon="letter"></task-app><task-app open icon="chrome2" iw="36" ih="36" nudge="margin:-6px 0 0 6px"></task-app><task-app open icon="vscode" iw="30" ih="30"></task-app><task-app open icon="xampp" iw="30" ih="30"></task-app>
</div>
<div class="n"><div><fit-text class="r">↑:</fit-text><fit-text w="61.500">0.13 KB/s</fit-text></div><div><fit-text class="r">↓:</fit-text><fit-text w="61.500">0.17 KB/s</fit-text></div></div>
<div class="t"><x-icon name="tup" w="14" h="8" style="margin-left:15px"></x-icon><x-icon name="cloud" w="20" h="13" style="margin-left:23px"></x-icon><x-icon name="wifi" w="20" h="16" style="margin-left:20px"></x-icon><x-icon name="sound" w="20" h="17" style="margin-left:10px"></x-icon><x-icon name="battery" w="20" h="17" style="margin-left:10px;margin-top:-2px"></x-icon></div>
<div class="k"><fit-text w="35.500">16:22</fit-text><fit-text w="77.500">16-11-2024</fit-text></div>
<div class="t"><x-icon name="bell" w="16" h="19" style="margin-left:11px"></x-icon></div>`);
define('desktop-screen', ':host{display:flex;flex-direction:column;width:1920px;height:1080px;overflow:hidden;background:#8cb1b2}', '<tab-strip></tab-strip><address-bar></address-bar><bookmarks-bar></bookmarks-bar><web-page></web-page><task-bar></task-bar>');
</script>
</body>
</html>
